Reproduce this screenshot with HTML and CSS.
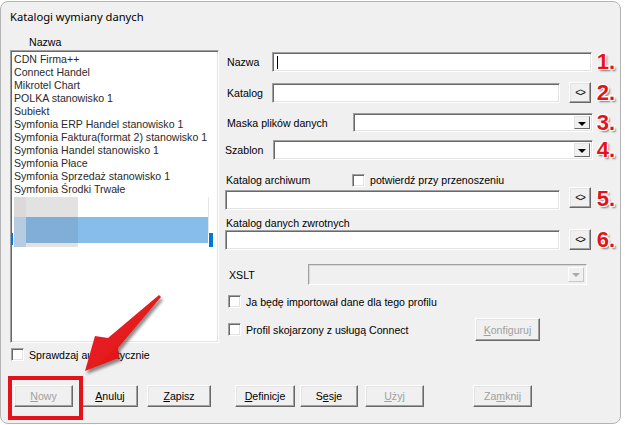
FILE: index.html
```html
<!DOCTYPE html>
<html lang="pl">
<head>
    <meta charset="UTF-8">
    <title>Katalogi wymiany danych</title>
    <link rel="stylesheet" href="styles.css">
</head>
<body>

    <div class="window">
        <div class="title">Katalogi wymiany danych</div>

        <div class="main">
            <div class="left">
                <div class="col-head">Nazwa</div>
                <div class="list">
                    <div class="item">CDN Firma++</div>
                    <div class="item">Connect Handel</div>
                    <div class="item">Mikrotel Chart</div>
                    <div class="item">POLKA stanowisko 1</div>
                    <div class="item">Subiekt</div>
                    <div class="item">Symfonia ERP Handel stanowisko 1</div>
                    <div class="item">Symfonia Faktura(format 2) stanowisko 1</div>
                    <div class="item">Symfonia Handel stanowisko 1</div>
                    <div class="item">Symfonia Płace</div>
                    <div class="item">Symfonia Sprzedaż stanowisko 1</div>
                    <div class="item">Symfonia Środki Trwałe</div>

                    <!-- smuga po zaznaczeniu (odrysowanie okna) -->
                    <span class="smear gray"></span>
                    <span class="smear gray-dark"></span>
                    <span class="smear sel"></span>
                    <span class="smear sel-mix"></span>
                    <span class="smear sel-dark"></span>
                    <span class="smear vline"></span>
                    <span class="smear mark-l"></span>
                    <span class="smear mark-r"></span>
                </div>

                <div class="check-row auto">
                    <span class="box"></span>Sprawdzaj automatycznie
                </div>

                <div class="btn-row left-buttons">
                    <button class="btn off w-nowy"><u>N</u>owy</button>
                    <button class="btn w-anuluj"><u>A</u>nuluj</button>
                    <button class="btn w-zapisz"><u>Z</u>apisz</button>
                </div>
            </div>

            <div class="right">
                <div class="row r1">
                    <span class="lbl lbl-short">Nazwa</span>
                    <span class="field f-nazwa"><span class="caret"></span></span>
                    <span class="num">1.</span>
                </div>
                <div class="row r2">
                    <span class="lbl lbl-short">Katalog</span>
                    <span class="field f-katalog"></span>
                    <button class="btn browse">&lt;&gt;</button>
                    <span class="num">2.</span>
                </div>
                <div class="row r3">
                    <span class="lbl lbl-long">Maska plików danych</span>
                    <span class="field combo c-maska"><span class="drop"></span></span>
                    <span class="num">3.</span>
                </div>
                <div class="row r4">
                    <span class="lbl lbl-szablon">Szablon</span>
                    <span class="field combo c-szablon"><span class="drop"></span></span>
                    <span class="num">4.</span>
                </div>
                <div class="row r5">
                    <span class="lbl lbl-arch">Katalog archiwum</span>
                    <span class="box"></span>potwierdź przy przenoszeniu
                </div>
                <div class="row r6">
                    <span class="field f-wide"></span>
                    <button class="btn browse">&lt;&gt;</button>
                    <span class="num">5.</span>
                </div>
                <div class="row r7">
                    <span class="lbl">Katalog danych zwrotnych</span>
                </div>
                <div class="row r8">
                    <span class="field f-wide"></span>
                    <button class="btn browse">&lt;&gt;</button>
                    <span class="num">6.</span>
                </div>
                <div class="row r9">
                    <span class="lbl lbl-xslt">XSLT</span>
                    <span class="field combo disabled c-xslt"><span class="drop"></span></span>
                </div>
                <div class="row r10 check-row">
                    <span class="box"></span>Ja będę importował dane dla tego profilu
                </div>
                <div class="row r11">
                    <div class="check-row connect">
                        <span class="box"></span>Profil skojarzony z usługą Connect
                    </div>
                    <button class="btn off w-konf"><u>K</u>onfiguruj</button>
                </div>

                <div class="btn-row right-buttons">
                    <button class="btn w-def"><u>D</u>efinicje</button>
                    <button class="btn w-sesje">S<u>e</u>sje</button>
                    <button class="btn off w-uzyj"><u>U</u>żyj</button>
                    <button class="btn off w-zamknij">Za<u>m</u>knij</button>
                </div>
            </div>
        </div>

        <div class="highlight"></div>

        <svg class="arrow" width="625" height="425" viewBox="0 0 625 425">
            <defs>
                <filter id="cien" x="-20%" y="-20%" width="140%" height="140%">
                    <feDropShadow dx="2" dy="3" stdDeviation="1.6" flood-color="#000" flood-opacity="0.45"/>
                </filter>
                <linearGradient id="czerw" x1="0" y1="0" x2="1" y2="1">
                    <stop offset="0" stop-color="#f0262a"/>
                    <stop offset="1" stop-color="#d90f14"/>
                </linearGradient>
            </defs>
            <polygon filter="url(#cien)" fill="url(#czerw)"
                points="159,295 108,338 95,336 85,371 119,358 118,348 161,297"/>
        </svg>
    </div>

</body>
</html>
```

FILE: styles.css
```css
* {
    box-sizing: border-box;
}

body {
    margin: 0;
    background: #fff;
    font-family: "Liberation Sans", Arial, sans-serif;
    font-size: 10.6px;
    color: #000;
}

.window {
    position: relative;
    width: 621px;
    height: 423px;
    margin-top: 1px;
    padding-left: 9px;
    background: #f0f0f0;
    border: 1px solid #b4b4b4;
    border-radius: 8px;
}

.title {
    height: 32px;
    padding-top: 7px;
    font-family: "Noto Sans", sans-serif;
    font-size: 11.2px;
    line-height: 16px;
}

.main {
    display: flex;
}

/* lewa kolumna - lista profili */
.left {
    width: 209px;
    display: flex;
    flex-direction: column;
}

.col-head {
    height: 16px;
    padding-left: 19px;
    line-height: 16px;
}

.list {
    position: relative;
    height: 293px;
    padding: 2px 0 0 3px;
    background: #fff;
    color: #2a2a2a;
    border: 1px solid;
    border-color: #a0a0a0 #fff #fff #a0a0a0;
    box-shadow: inset 1px 1px 0 #696969, inset -1px -1px 0 #e3e3e3;
}

.item {
    height: 13px;
    line-height: 13px;
    white-space: nowrap;
}

.smear {
    position: absolute;
}

.smear.gray { left: 3px; top: 146px; width: 64px; height: 50px; background: #e2e2e2; }
.smear.gray-dark { left: 3px; top: 146px; width: 12px; height: 20px; background: #dadada; }
.smear.sel { left: 15px; top: 166px; width: 182px; height: 26px; background: #87bdea; }
.smear.sel-mix { left: 3px; top: 166px; width: 12px; height: 30px; background: #b7cce0; }
.smear.sel-dark { left: 15px; top: 166px; width: 52px; height: 26px; background: #80aed6; }
.smear.vline { left: 197px; top: 146px; width: 1px; height: 37px; background: #e6e6e6; }
.smear.mark-l { left: 0; top: 182px; width: 2px; height: 12px; background: #0078d7; }
.smear.mark-r { left: 198px; top: 182px; width: 4px; height: 14px; background: #0078d7; }

.check-row {
    display: flex;
    align-items: center;
    height: 13px;
    white-space: nowrap;
}

.box {
    flex: none;
    width: 13px;
    height: 13px;
    margin-right: 5px;
    background: #fff;
    border: 1px solid;
    border-color: #a0a0a0 #fff #fff #a0a0a0;
    box-shadow: inset 1px 1px 0 #696969, inset -1px -1px 0 #e3e3e3;
}

.auto {
    margin-top: 5px;
    margin-left: 1px;
}

.btn-row {
    display: flex;
}

.left-buttons {
    margin-top: 24px;
    padding-left: 4px;
    gap: 9px;
}

.btn {
    flex: none;
    height: 22px;
    padding: 0;
    font: inherit;
    color: #000;
    text-align: center;
    background: #f0f0f0;
    border: 1px solid;
    border-color: #fff #696969 #696969 #fff;
    box-shadow: inset -1px -1px 0 #a0a0a0, inset 1px 1px 0 #e3e3e3;
}

.btn.off {
    color: #a0a0a0;
}

.w-nowy { width: 59px; }
.w-anuluj { width: 56px; }
.w-zapisz { width: 64px; }

/* prawa kolumna - formularz */
.right {
    width: 392px;
    margin-left: 6px;
    display: flex;
    flex-direction: column;
}

.row {
    display: flex;
    align-items: center;
    white-space: nowrap;
}

.r1 { margin-top: 18px; height: 20px; }
.r2 { margin-top: 10px; height: 21px; }
.r3 { margin-top: 10px; height: 19px; }
.r4 { margin-top: 8px; height: 20px; }
.r5 { margin-top: 13px; height: 14px; }
.r6 { height: 23px; align-items: flex-start; }
.r7 { margin-top: 6px; height: 13px; padding-left: 1px; }
.r8 { height: 21px; }
.r9 { margin-top: 14px; height: 21px; }
.r10 { margin-top: 10px; padding-left: 3px; }
.r11 { margin-top: 10px; height: 23px; }

.r6 .field { margin-top: 3px; }
.r6 .num { align-self: center; }

.lbl { flex: none; }
.lbl-short { width: 47px; padding-left: 2px; }
.lbl-long { width: 128px; padding-left: 2px; }
.lbl-szablon { width: 48px; }
.lbl-arch { width: 127px; padding-left: 1px; }
.lbl-xslt { width: 83px; padding-left: 4px; }

.field {
    flex: none;
    height: 20px;
    background: #fff;
    border: 1px solid;
    border-color: #a0a0a0 #fff #fff #a0a0a0;
    box-shadow: inset 1px 1px 0 #696969, inset -1px -1px 0 #e3e3e3;
}

.f-nazwa { width: 320px; padding: 3px 0 0 4px; }
.f-katalog { width: 288px; }
.f-wide { width: 335px; }

.caret {
    display: block;
    width: 1px;
    height: 13px;
    background: #000;
}

.combo {
    display: flex;
    justify-content: flex-end;
    padding: 2px;
}

.c-maska { width: 240px; height: 19px; }
.c-szablon { width: 320px; }
.c-xslt { width: 279px; height: 21px; }

.drop {
    position: relative;
    width: 16px;
    height: 100%;
    background: #f0f0f0;
    border: 1px solid;
    border-color: #e3e3e3 #696969 #696969 #e3e3e3;
}

.drop::after {
    content: "";
    position: absolute;
    left: 3px;
    top: 5px;
    border-left: 4px solid transparent;
    border-right: 4px solid transparent;
    border-top: 4px solid #000;
}

.combo.disabled {
    background: #f0f0f0;
    border-color: #a0a0a0 #fff #fff #a0a0a0;
    box-shadow: inset 1px 1px 0 #d8d8d8;
}

.combo.disabled .drop {
    border-color: #fff #c8c8c8 #c8c8c8 #fff;
}

.combo.disabled .drop::after {
    border-top-color: #a8a8a8;
}

.browse {
    width: 22px;
    height: 21px;
    margin-left: 9px;
    font-size: 10px;
    letter-spacing: -1px;
}

.num {
    margin-left: auto;
    padding-right: 2px;
    font-family: "Liberation Sans", Arial, sans-serif;
    font-size: 22px;
    font-weight: bold;
    line-height: 20px;
    color: #e3131b;
    text-shadow: -1px -1px 0 #fff, 1px -1px 0 #fff, -1px 1px 0 #fff, 1px 1px 0 #fff,
        0 -1px 0 #fff, 0 1px 0 #fff, -1px 0 0 #fff, 1px 0 0 #fff,
        2px 2px 2px rgba(0, 0, 0, 0.5);
}

.connect {
    width: 250px;
    padding-left: 3px;
}

.w-konf { width: 65px; height: 23px; }

.right-buttons {
    margin-top: 44px;
    padding-left: 10px;
}

.w-def { width: 60px; }
.w-sesje { width: 58px; margin-left: 5px; }
.w-uzyj { width: 59px; margin-left: 7px; }
.w-zamknij { width: 59px; margin-left: 49px; }

/* oznaczenia na zrzucie */
.highlight {
    position: absolute;
    left: 7px;
    top: 374px;
    width: 75px;
    height: 44px;
    border: 4px solid #e3131b;
}

.arrow {
    position: absolute;
    left: -1px;
    top: -2px;
    pointer-events: none;
}
```
